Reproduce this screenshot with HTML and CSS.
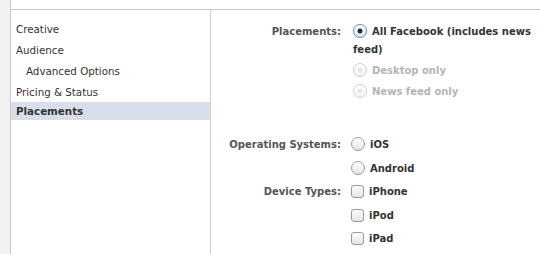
FILE: index.html
```html
<!DOCTYPE html>
<html lang="en">
  <head>
    <meta charset="UTF-8" />
    <title>Placements</title>
    <link rel="stylesheet" href="styles.css">
  </head>
  <body>
    <div class="page">
      <div class="gutter"></div>
      <div class="panel">
        <div class="topbar"></div>
        <div class="content">
          <!-- 左侧导航 -->
          <ul class="nav">
            <li>Creative</li>
            <li>Audience</li>
            <li class="sub">Advanced Options</li>
            <li>Pricing &amp; Status</li>
            <li class="active">Placements</li>
          </ul>
          <!-- 表单 -->
          <div class="form">
            <div class="field placements">
              <div class="label">Placements:</div>
              <div class="options">
                <div class="option">
                  <span class="radio checked"></span>All Facebook (includes news feed)
                </div>
                <div class="option disabled">
                  <span class="radio"></span>Desktop only
                </div>
                <div class="option disabled">
                  <span class="radio"></span>News feed only
                </div>
              </div>
            </div>
            <div class="field os">
              <div class="label">Operating Systems:</div>
              <div class="options">
                <div class="option"><span class="radio"></span>iOS</div>
                <div class="option"><span class="radio"></span>Android</div>
              </div>
            </div>
            <div class="field devices">
              <div class="label">Device Types:</div>
              <div class="options">
                <div class="option"><span class="check"></span>iPhone</div>
                <div class="option"><span class="check"></span>iPod</div>
                <div class="option"><span class="check"></span>iPad</div>
              </div>
            </div>
          </div>
        </div>
      </div>
    </div>
  </body>
</html>
```

FILE: styles.css
```css
* {
  margin: 0;
  padding: 0;
  box-sizing: border-box;
}
body {
  width: 540px;
  height: 254px;
  overflow: hidden;
  background-color: #fff;
  font-family: "DejaVu Sans", Verdana, sans-serif;
  font-size: 10.3px;
  color: #333;
}
ul {
  list-style: none;
}
.page {
  display: flex;
  height: 254px;
}
.gutter {
  width: 11px;
  flex: none;
  background-color: #f2f2f2;
  border-right: 1px solid #c9c9c9;
}
.panel {
  flex: 1;
  display: flex;
  flex-direction: column;
}
.topbar {
  height: 10px;
  border-bottom: 1px solid #c4c4c4;
}
.content {
  flex: 1;
  display: flex;
}
/* 
  左侧导航
*/
.nav {
  width: 200px;
  flex: none;
  padding-top: 9px;
  border-right: 1px solid #d0d0d0;
}
.nav li {
  height: 21px;
  line-height: 21px;
  padding-left: 5px;
}
.nav .sub {
  padding-left: 15px;
}
.nav .active {
  height: 18px;
  line-height: 18px;
  margin-top: -1px;
  background-color: #d8dfea;
  font-weight: bold;
}
/* 
  表单
*/
.form {
  flex: 1;
  padding-top: 13px;
  font-weight: bold;
  font-size: 10px;
}
.field {
  display: grid;
  grid-template-columns: 130px 1fr;
  column-gap: 10px;
}
.label {
  text-align: right;
  color: #555;
  line-height: 18px;
}
.options {
  width: 186px;
}
.option {
  line-height: 18px;
  margin-bottom: 3px;
}
.placements .options {
  padding-left: 2px;
}
.option.disabled {
  color: #b4b4b4;
}
.os {
  margin-top: 32px;
}
.os .option,
.devices .option {
  margin-bottom: 5.5px;
}
.radio,
.check {
  display: inline-block;
  width: 14px;
  height: 14px;
  margin-right: 5px;
  vertical-align: -3px;
  border: 1px solid #9a9a9a;
  background: linear-gradient(#fff, #e4e4e4);
}
.radio {
  border-radius: 50%;
}
.check {
  width: 13px;
  height: 13px;
  border-radius: 3px;
}
.radio.checked {
  border-color: #6c8fbf;
  background: radial-gradient(circle, #2a2a2a 0 2.2px, transparent 2.8px),
    linear-gradient(#fff, #dce6f2);
  box-shadow: 0 0 1px #8fb0dc;
}
.disabled .radio {
  border-color: #cfcfcf;
  background: radial-gradient(circle, #e6e6e6 0 2px, transparent 2.6px),
    linear-gradient(#fff, #f2f2f2);
}
```
